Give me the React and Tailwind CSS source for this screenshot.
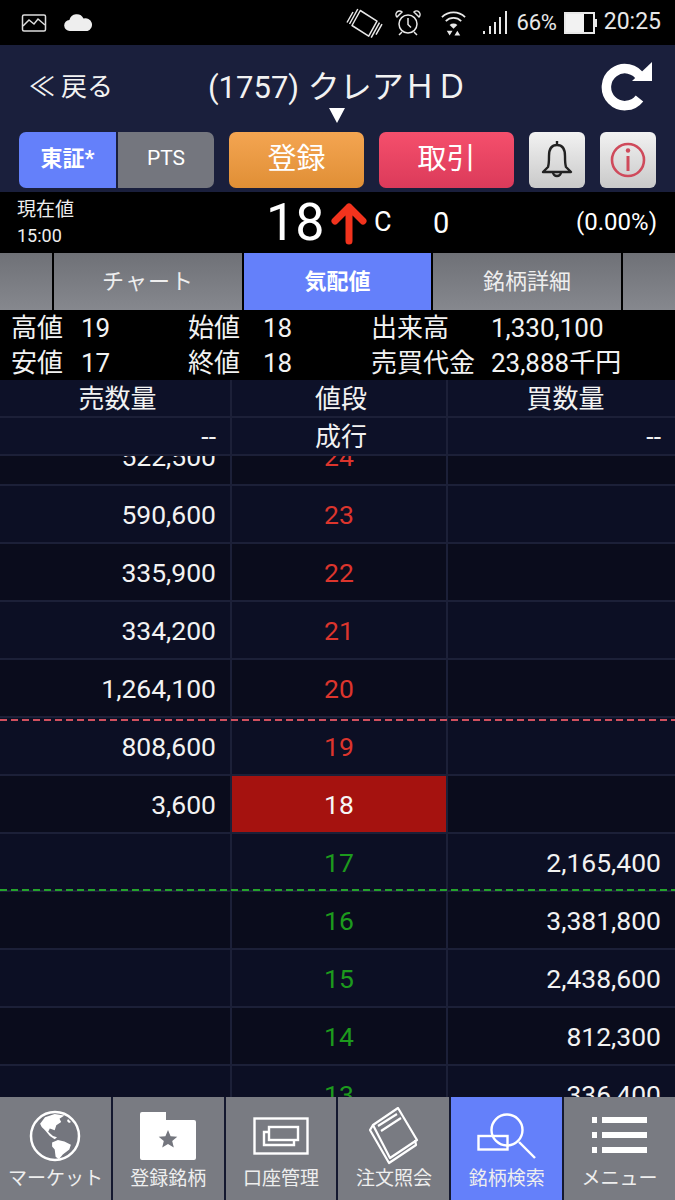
import React from "react";

const font = { fontFamily: 'Roboto, "Noto Sans CJK JP", sans-serif' };

function StatusBar() {
  return (
    <div className="h-[45px] shrink-0 bg-black flex items-center text-[#e8e8e8] pl-[21px] pr-[14px]">
      <svg width="26" height="20" viewBox="0 0 26 20" fill="none" stroke="#ddd" strokeWidth="1.500"><rect x="1.500" y="2" width="23" height="16" rx="1.500" /><path d="M2 13l6-6 5 4 4-5 7 6" /></svg>
      <svg width="30" height="18" viewBox="0 0 30 18" fill="#eee" className="ml-[17px]"><path d="M6 17a5.500 5.500 0 0 1-.6-11A7.500 7.500 0 0 1 19.500 4.600 6.300 6.300 0 0 1 23.500 17z" /></svg>
      <div className="flex-1" />
      <svg width="32" height="28" viewBox="0 0 32 28" fill="none" stroke="#e8e8e8" strokeWidth="1.500" strokeLinejoin="round" className="overflow-visible"><path d="M11.300 1.500L28 12.200 19.700 27.200 3 16.500z" /><path d="M.5 15L8.800 0M-2 13.500L4 3M30.500 13.700L22.200 28.700M33 15.200L27 25.700" /></svg>
      <svg width="26" height="26" viewBox="0 0 26 26" fill="none" stroke="#e8e8e8" strokeWidth="1.500" className="ml-[14px]"><circle cx="13" cy="14" r="9" /><path d="M13 8v6.500l3 3M4 25l3-3M22 25l-3-3" /><path d="M2 7a3.500 3.500 0 0 1 5-5zM24 7a3.500 3.500 0 0 0-5-5z" /></svg>
      <svg width="27" height="28" viewBox="0 0 28 28" fill="none" stroke="#e8e8e8" strokeWidth="1.800" className="ml-[19px]"><path d="M2 8a17 17 0 0 1 24 0M6 12a11.500 11.500 0 0 1 16 0" /><path d="M10 16a6 6 0 0 1 8 0l-4 4z" fill="#e8e8e8" stroke="none" /><path d="M7 22h6l-3 5zM15 27h6l-3-5z" fill="#e8e8e8" stroke="none" /></svg>
      <svg width="26" height="28" viewBox="0 0 26 28" fill="#e8e8e8" className="ml-[15px]"><rect x="1" y="22" width="2" height="3" /><rect x="7" y="17" width="2" height="8" /><rect x="12" y="13" width="2" height="12" /><rect x="17" y="8" width="2" height="17" /><rect x="23" y="2" width="2" height="23" /></svg>
      <span className="text-[22px] ml-[8px] tracking-[-0.2px]">66%</span>
      <div className="ml-[7px] w-[31px] h-[22px] border-2 border-[#e8e8e8] flex"><div className="w-[18px] bg-[#f2f2f2]" /></div>
      <div className="w-[2px] h-[8px] bg-[#e8e8e8]" />
      <span className="text-[23px] ml-[7px]">20:25</span>
    </div>
  );
}

function Header() {
  return (
    <div className="h-[82px] shrink-0 bg-[#1a1f3c] flex items-center relative text-[#f2f2f2]">
      <div className="w-[208px] pl-[29px] text-[26px] leading-none flex items-center pt-[2px]"><span className="mr-[6px]">≪</span>戻る</div>
      <div className="text-[31px] leading-none pt-[2px] whitespace-nowrap">(1757) <span className="text-[32px] ml-[1px]">クレアＨＤ</span></div>
      <div className="absolute left-[329px] top-[63px] w-0 h-0 border-l-[8px] border-r-[8px] border-t-[15px] border-l-transparent border-r-transparent border-t-white" />
      <svg width="52" height="52" viewBox="0 0 52 52" className="absolute left-[601px] top-[15px]" fill="none">
        <path d="M40 18A18.500 18.500 0 1 0 38.500 38.500" stroke="#fff" strokeWidth="9.500" />
        <path d="M51 2v19H31z" fill="#fff" />
      </svg>
    </div>
  );
}

function ActionBar() {
  return (
    <div className="h-[65px] shrink-0 bg-[#1a1f3c] flex items-start pt-[5px] pl-[19px] text-white">
      <div className="w-[195px] h-[56px] rounded-[7px] overflow-hidden flex">
        <div className="w-[97px] bg-[#6480fa] flex items-center justify-center text-[22px] font-bold pb-[3px]">東証*</div>
        <div className="w-[2px] bg-[#1a1f3c]" />
        <div className="flex-1 bg-[#74767e] flex items-center justify-center text-[21px] pb-[2px]">PTS</div>
      </div>
      <div className="ml-[15px] w-[135px] h-[56px] rounded-[7px] bg-gradient-to-b from-[#f4a551] to-[#e08f35] flex items-center justify-center text-[29px]">登録</div>
      <div className="ml-[15px] w-[135px] h-[56px] rounded-[7px] bg-gradient-to-b from-[#f54f6c] to-[#db3a5a] flex items-center justify-center text-[29px]">取引</div>
      <div className="ml-[15px] w-[56px] h-[56px] rounded-[6px] bg-gradient-to-b from-[#f2f2f2] to-[#c9c9c9] flex items-center justify-center">
        <svg width="32" height="40" viewBox="0 0 32 40" fill="none" stroke="#222" strokeWidth="2.400"><path d="M16 1v4M7 27c1-3 1-6 1-11 0-7 3-11 8-11s8 4 8 11c0 5 0 8 1 11l5 5H2z" strokeLinejoin="round" /><path d="M12 32a4 4 0 0 0 8 0" /></svg>
      </div>
      <div className="ml-[15px] w-[56px] h-[56px] rounded-[6px] bg-gradient-to-b from-[#f2f2f2] to-[#c9c9c9] flex items-center justify-center">
        <svg width="36" height="46" viewBox="0 0 36 46" fill="none" stroke="#cf4a5b" strokeWidth="2.600"><circle cx="18" cy="23" r="16" /><circle cx="18" cy="13.500" r="2.200" fill="#cf4a5b" stroke="none" /><path d="M18 19v15" strokeWidth="3" /></svg>
      </div>
    </div>
  );
}

function PriceRow() {
  return (
    <div className="h-[61px] shrink-0 bg-black flex text-white relative">
      <div className="w-[266px] pl-[17px] pt-[5px] text-[19px] leading-[26px] text-[#eee]">
        <div>現在値</div>
        <div className="text-[18px]">15:00</div>
      </div>
      <div className="text-[52px] leading-[61px] w-[64px]">18</div>
      <svg width="38" height="44" viewBox="0 0 38 44" className="mt-[9px]" fill="none" stroke="#f2331d" strokeWidth="7" strokeLinecap="round" strokeLinejoin="round"><path d="M19 40V6M5 20L19 6l14 14" /></svg>
      <div className="text-[27px] ml-[6px] mt-[15px] leading-[30px] w-[59px]">C</div>
      <div className="text-[29px] mt-[14px] leading-[34px]">0</div>
      <div className="absolute right-[18px] top-[15px] text-[24px] leading-[30px]">(0.00%)</div>
    </div>
  );
}

function Tabs() {
  const tab = "h-[57px] flex items-center justify-center text-[22px] shrink-0";
  return (
    <div className="h-[57px] shrink-0 bg-black flex gap-[2px] overflow-hidden text-[#eee]">
      <div className={`${tab} w-[52px] bg-gradient-to-b from-[#6f7177] to-[#86888e]`} />
      <div className={`${tab} w-[188px] bg-gradient-to-b from-[#6f7177] to-[#86888e] tracking-[1px]`}>チャート</div>
      <div className={`${tab} w-[187px] bg-[#6480fa] font-bold text-white`}>気配値</div>
      <div className={`${tab} w-[188px] bg-gradient-to-b from-[#6f7177] to-[#86888e]`}>銘柄詳細</div>
      <div className={`${tab} w-[60px] bg-gradient-to-b from-[#6f7177] to-[#86888e]`} />
    </div>
  );
}

function Info() {
  const Row = ({ a, b, c, d, e, f }) => (
    <div className="flex h-[35px] items-center text-[26px] leading-none text-[#f2f2f2] whitespace-nowrap">
      <span className="w-[70px] pl-[11px]">{a}</span><span className="w-[118px] pl-[11px]">{b}</span>
      <span className="w-[75px]">{c}</span><span className="w-[108px]">{d}</span>
      <span className="w-[120px]">{e}</span><span>{f}</span>
    </div>
  );
  return (
    <div className="h-[70px] shrink-0 bg-black">
      <Row a="高値" b="19" c="始値" d="18" e="出来高" f="1,330,100" />
      <Row a="安値" b="17" c="終値" d="18" e="売買代金" f="23,888千円" />
    </div>
  );
}

function Cols({ l, m, r, h, cls = "", mCls = "", lCls = "", rCls = "" }) {
  return (
    <div className={`flex ${h} shrink-0 border-b-2 border-[#1c2038] ${cls}`}>
      <div className={`w-[230px] pr-[14px] pt-[1px] flex items-center justify-end text-[26.5px] text-[#f2f2f2] ${lCls}`}>{l}</div>
      <div className={`w-[216px] border-l-2 border-[#1c2038] pt-[1px] flex items-center justify-center text-[26.5px] ${mCls}`}>{m}</div>
      <div className={`flex-1 border-l-2 border-[#1c2038] pr-[14px] pt-[1px] flex items-center justify-end text-[26.5px] text-[#f2f2f2] ${rCls}`}>{r}</div>
    </div>
  );
}

const rows = [
  ["522,500", 24, "", "r"], ["590,600", 23, "", "r"], ["335,900", 22, "", "r"], ["334,200", 21, "", "r"],
  ["1,264,100", 20, "", "r", "red"], ["808,600", 19, "", "r"], ["3,600", 18, "", "cur"], ["", 17, "2,165,400", "g", "green"],
  ["", 16, "3,381,800", "g"], ["", 15, "2,438,600", "g"], ["", 14, "812,300", "g"], ["", 13, "336,400", "g"],
];

function Board() {
  return (
    <div className="flex-1 min-h-0 overflow-hidden bg-[#0b0e22] relative">
      <Cols h="h-[38px]" cls="relative z-10 bg-[#0d1128]" l="売数量" lCls="!pr-0 !justify-center !text-[26px] pl-[5px] !pt-[3px]" rCls="!pr-0 !justify-center !text-[26px] pl-[8px] !pt-[3px]" mCls="text-[#f2f2f2] !text-[26px] pl-[4px] !pt-[3px]" m="値段" r="買数量" />
      <Cols h="h-[38px]" cls="relative z-10 bg-[#0d1128]" l="--" m="成行" r="--" mCls="text-[#f2f2f2] !text-[26px] pl-[4px] !pt-[3px]" />
      <div className="mt-[-28px]">
        {rows.map(([l, m, r, k, line], i) => (
          <div key={m} className="relative">
            <Cols
              h="h-[58px]"
              cls={i % 2 ? "bg-[#0c0f24]" : "bg-[#0a0c1c]"}
              l={l}
              m={m}
              r={r}
              mCls={k === "r" ? "text-[#dc352d]" : k === "g" ? "text-[#1d9a1d]" : "bg-[#a5120f] text-[#f6f6f6]"}
            />
            {line === "red" && <div className="absolute z-10 left-0 right-0 bottom-[-3px] h-[2px] bg-[repeating-linear-gradient(90deg,#d0505f_0_7px,transparent_7px_11px)]" />}
            {line === "green" && <div className="absolute z-10 left-0 right-0 bottom-[1px] h-[2px] bg-[repeating-linear-gradient(90deg,#25a32c_0_7px,transparent_7px_11px)]" />}
          </div>
        ))}
      </div>
    </div>
  );
}

const Globe = () => (
  <svg width="52" height="52" viewBox="0 0 52 52"><circle cx="26" cy="26" r="24" fill="#74767e" stroke="#fff" strokeWidth="2.500" /><path d="M11.100 13.700L16 7.200 25.700 4 35.400 5.600 30.500 8.800 32.200 12 27.300 15.300 25.700 20.200 20.800 18.500 19.200 21.800 24 26 28 27.300 25.700 29.200 20.800 26 16 20.200 12.700 16.900zM23.100 32.500L28.900 29.900 35.400 31.500 41.900 34.700 40.300 39.600 33.800 44.500 29.900 49.300 26.600 46.700 25.700 39.600 23.100 36.400zM39 9l3 3-2 1-2-2z" fill="#fff" /></svg>
);
const Folder = () => (
  <svg width="56" height="48" viewBox="0 0 56 48"><path d="M2 0h24v8h28a2 2 0 0 1 2 2v36a2 2 0 0 1-2 2H2a2 2 0 0 1-2-2V2a2 2 0 0 1 2-2z" fill="#fff" /><path d="M28 18l2.600 6.200 6.700.5-5.100 4.300 1.600 6.500-5.800-3.500-5.800 3.500 1.600-6.500-5.100-4.300 6.700-.5z" fill="#74767e" /></svg>
);
const Account = () => (
  <svg width="56" height="38" viewBox="0 0 56 38" fill="none" stroke="#fff" strokeWidth="2.400"><rect x="1.500" y="1.500" width="53" height="35" /><rect x="16" y="10" width="29" height="13" /><path d="M16 15h-5v13h30v-5" /></svg>
);
const Orders = () => (
  <svg width="50" height="58" viewBox="0 0 50 58" fill="none" stroke="#fff" strokeWidth="2.200" strokeLinejoin="round"><path d="M4 18L29 1l19 32-27 18z" /><path d="M4 18l-3 5 19 33 27-18-1-5" /><path d="M9 19l19-12M12 24l20-13" /></svg>
);
const Search = () => (
  <svg width="60" height="46" viewBox="0 0 60 46" fill="none" stroke="#fff" strokeWidth="2.400"><circle cx="30" cy="17" r="15.500" /><rect x="1.500" y="23" width="29" height="13.500" /><path d="M42 29l16 16" /></svg>
);
const Menu = () => (
  <svg width="56" height="38" viewBox="0 0 56 38" fill="#fff"><rect x="0" y="0" width="5" height="6" /><rect x="10" y="0" width="45" height="6" /><rect x="0" y="15" width="5" height="6" /><rect x="10" y="15" width="45" height="6" /><rect x="0" y="30" width="5" height="6" /><rect x="10" y="30" width="45" height="6" /></svg>
);

function Nav() {
  const items = [
    ["マーケット", <Globe />],
    ["登録銘柄", <Folder />],
    ["口座管理", <Account />],
    ["注文照会", <Orders />],
    ["銘柄検索", <Search />, true],
    ["メニュー", <Menu />],
  ];
  return (
    <div className="h-[103px] shrink-0 flex gap-[2px] bg-[#14182f] relative">
      {items.map(([t, ic, on]) => (
        <div key={t} className={`flex-1 flex flex-col items-center ${on ? "bg-[#6480fa]" : "bg-[#797b82]"}`}>
          <div className="h-[68px] flex items-center justify-center pt-[9px]">{ic}</div>
          <div className="text-[19px] leading-[28px] text-[#eee] whitespace-nowrap">{t}</div>
        </div>
      ))}
    </div>
  );
}

export default function App() {
  return (
    <div className="w-[675px] h-[1200px] flex flex-col overflow-hidden bg-black" style={font}>
      <StatusBar />
      <Header />
      <ActionBar />
      <PriceRow />
      <Tabs />
      <Info />
      <Board />
      <Nav />
    </div>
  );
}
